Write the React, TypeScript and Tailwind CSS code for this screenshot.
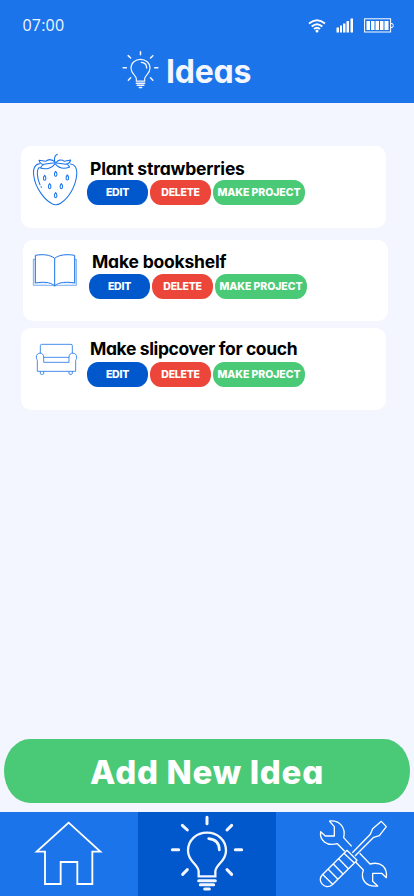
import React from 'react';

const face = "font-['Inter','Liberation_Sans',sans-serif] [font-feature-settings:'cv11','ss03']";

function Bulb({ className }: { className: string }) {
  return (
    <svg viewBox="96 27 222 234" className={className} fill="none" stroke="#f3f6ff" strokeLinecap="round">
      <path d="M207 37V56M133 61L148 75M281 61L267 75M103 134H122M292 134H311M148 194L134 208M267 194L281 208" strokeWidth="9" />
      <path d="M182 214V199C181 178 150 170 150 137C150 104 176 83 207 83S264 104 264 137C264 170 233 178 232 199V214Z" strokeWidth="7" />
      <path d="M212 101C233 103 244 115 244 135" strokeWidth="8" />
      <path d="M182 227H232M187 239H227M200 252H214" strokeWidth="9" />
    </svg>
  );
}

function Strawberry() {
  return (
    <svg viewBox="48 39 144 159" className="h-[53px] w-12" fill="none" stroke="#1b74e9" strokeWidth="3.2" strokeLinecap="round" strokeLinejoin="round">
      <path d="M119 66C117 55 119 47 127 43M123 68C112 58 100 57 92 64L72 61C75 69 79 74 86 73C81 76 78 80 76 84C94 90 112 84 120 71C131 84 148 88 164 81C162 76 158 73 153 72C161 72 165 67 167 60L148 64C139 57 128 60 123 68ZM119 68L86 73M124 69L153 73" />
      <path d="M74 71C59 72 54 87 56 105C60 144 89 179 109 190C118 196 128 196 138 189C162 173 182 139 185 105C187 84 180 73 166 72M73 82C63 90 67 117 75 134M78 140L79 142" />
      {[[122, 102], [89, 114], [157, 113], [104, 139], [139, 139], [122, 166]].map(([x, y]) => (
        <path key={`${x}-${y}`} transform={`translate(${x} ${y})`} d="M0-8C-5-3-5 7 0 7S5-3 0-8Z" />
      ))}
    </svg>
  );
}

function Book() {
  return (
    <svg viewBox="48 48 144 111" className="h-[37px] w-12" fill="none" stroke="#1b74e9" strokeWidth="3" strokeLinejoin="round">
      <path d="M119 70C105 59 84 57 61 61V144C84 140 105 141 119 152C133 141 156 140 179 144V61C155 57 133 59 119 70V152" />
      <path d="M61 73H55V151H108C113 151 115 153 119 153S125 151 130 151H184V73H179" strokeWidth="1.7" />
      <path d="M58 73V147H96M182 73V147H145" strokeWidth="1" opacity=".5" />
    </svg>
  );
}

function Couch() {
  return (
    <svg viewBox="60 51 129 102" className="h-[34px] w-[43px]" fill="none" stroke="#1b74e9" strokeWidth="2.4" strokeLinejoin="round">
      <path d="M76 85V62Q76 58 80 58H168Q172 58 172 62V85M86 97H162M86 112H162V96C162 80 185 81 185 96C185 102 182 105 182 107V139H67V107C67 105 64 102 64 96C64 81 86 80 86 96ZM76 139V146Q76 148 79 148H83Q86 148 86 145V139M162 139V145Q162 148 165 148H169Q172 148 172 145V139" />
    </svg>
  );
}

const pill = 'flex h-[25px] shrink-0 items-center justify-center rounded-[11px/12px] pt-[1.5px] text-[10.5px] leading-none font-extrabold whitespace-nowrap text-white';

function Actions() {
  return (
    <div className="flex gap-[2px]">
      <button className={`${pill} w-[61px] bg-[#0058cc] tracking-[-0.25px]`}>EDIT</button>
      <button className={`${pill} w-[61px] bg-[#ec4539] tracking-[-0.25px]`}>DELETE</button>
      <button className={`${pill} w-[92px] bg-[#4ac977] tracking-[-0.08px]`}>MAKE PROJECT</button>
    </div>
  );
}

function Idea({ title, card, iconPad, titleClass, children }: { title: string; card: string; iconPad: string; titleClass: string; children: React.ReactNode }) {
  return (
    <article className={`flex w-[365px] shrink-0 rounded-[10px] bg-white ${card}`}>
      <div className={`w-[66px] shrink-0 ${iconPad}`}>{children}</div>
      <div>
        <div className="h-[34px] pl-[3px]">
          <h2 className={`text-[17.5px] leading-[22px] font-bold whitespace-nowrap text-black ${titleClass}`}>{title}</h2>
        </div>
        <Actions />
      </div>
    </article>
  );
}

export default function App() {
  return (
    <div className={`flex h-[896px] w-[414px] flex-col overflow-hidden bg-[#f3f6ff] ${face}`}>
      <header className="h-[103px] shrink-0 bg-[#1b74e9] text-[#f3f6ff]">
        <div className="flex h-[51px] items-center pl-[22.5px]">
          <span className="w-[285.500px] pb-[2px] font-['Open_Sans',sans-serif] text-[16px] leading-none tracking-[0.2px]">07:00</span>
          <svg viewBox="0 0 18 15" className="h-[15px] w-[18px]" fill="none" stroke="#fff" strokeWidth="2">
            <path d="M1 5.5Q9-1 17 5.5M3.7 8.5Q9 4 14.3 8.5M6 11Q9 8.5 12 11" />
            <circle cx="9" cy="13" r="1.5" fill="#fff" stroke="none" />
          </svg>
          <svg viewBox="0 0 17 15" className="ml-[10px] h-[15px] w-[17px]" fill="#fff">
            <path d="M.5 9.5H3V14.5H.5ZM4 7.5H6V14.5H4ZM7 5.5H9.5V14.5H7ZM10.500 3H13V14.5H10.500ZM14.500 .5H17V14.5H14.500Z" />
          </svg>
          <svg viewBox="0 0 30 15" className="ml-[11px] h-[15px] w-[30px]" fill="#fff">
            <rect x=".6" y=".8" width="26" height="13.2" fill="none" stroke="#fff" strokeWidth="1" />
            <path d="M2.5 3H6V12H2.5ZM7 3H10.5V12H7ZM11.5 3H15V12H11.5ZM16 3H19.5V12H16ZM20.5 3H24.5V12H20.5Z" />
            <path d="M27 5.5Q29.3 5 29.3 7.5T27 9.5" fill="none" stroke="#fff" strokeWidth="1" />
          </svg>
        </div>
        <div className="-mt-px flex pl-[122px]">
          <Bulb className="h-[39px] w-[37px]" />
          <h1 className="ml-[7px] pt-[5px] text-[32px] leading-[34px] font-bold tracking-[-0.2px]">Ideas</h1>
        </div>
      </header>

      <main className="flex flex-1 flex-col pt-[43px]">
        <Idea title="Plant strawberries" card="ml-[21px] h-[82px]" iconPad="pt-[7px] pl-[10px]" titleClass="pt-[12px] tracking-[-0.2px]"><Strawberry /></Idea>
        <Idea title="Make bookshelf" card="mt-[12px] ml-[23px] h-[81px]" iconPad="pt-[11px] pl-[8px]" titleClass="pt-[11px] tracking-[-0.2px]"><Book /></Idea>
        <Idea title="Make slipcover for couch" card="mt-[7px] ml-[21px] h-[82px]" iconPad="pt-[14px] pl-[14px]" titleClass="pt-[10px] tracking-[-0.38px]"><Couch /></Idea>
      </main>

      <button className="mx-1 mb-[9px] flex h-16 shrink-0 items-center justify-center rounded-[26px/32px] bg-[#4ac977] pt-[3px] text-[33px] leading-none font-extrabold tracking-[0.7px] whitespace-nowrap text-white">Add New Idea</button>

      <nav className="flex h-[84px] shrink-0 bg-[#1b74e9]">
        <a className="w-[138px] pt-[8px] pl-[34px]">
          <svg viewBox="102 45 207 201" className="h-[67px] w-[69px]" fill="none" stroke="#fff" strokeWidth="5.5">
            <path d="M206 53L110 140H135V237H182V171H232V237H277V140H301Z" />
          </svg>
        </a>
        <a className="w-[138px] bg-[#0058cc] pt-[2px] pl-[32px]"><Bulb className="h-[78px] w-[74px]" /></a>
        <a className="w-[138px] pt-[6px] pl-[42px]">
          <svg viewBox="132 39 213 213" className="size-[71px]" fill="none" stroke="#fff" strokeWidth="4" strokeLinejoin="round">
            <path d="M166 48L181 65V93H154L140 80C136 105 157 125 190 116L212 139M233 124L209 98C216 67 197 45 166 48" />
            <path d="M245 171L268 195C258 223 276 247 311 243L296 229V205H323L337 218C341 187 320 168 288 177L257 145" />
            <path d="M235 143L289 88L296 71L322 49L337 65L316 92L299 97L243 153" />
            <path d="M219 136L249 166L241 174L175 239C152 257 127 227 145 209L210 145ZM210 145L241 174M194 161L223 191M178 177L207 207M162 192L191 222M147 209L176 238" />
          </svg>
        </a>
      </nav>
    </div>
  );
}
